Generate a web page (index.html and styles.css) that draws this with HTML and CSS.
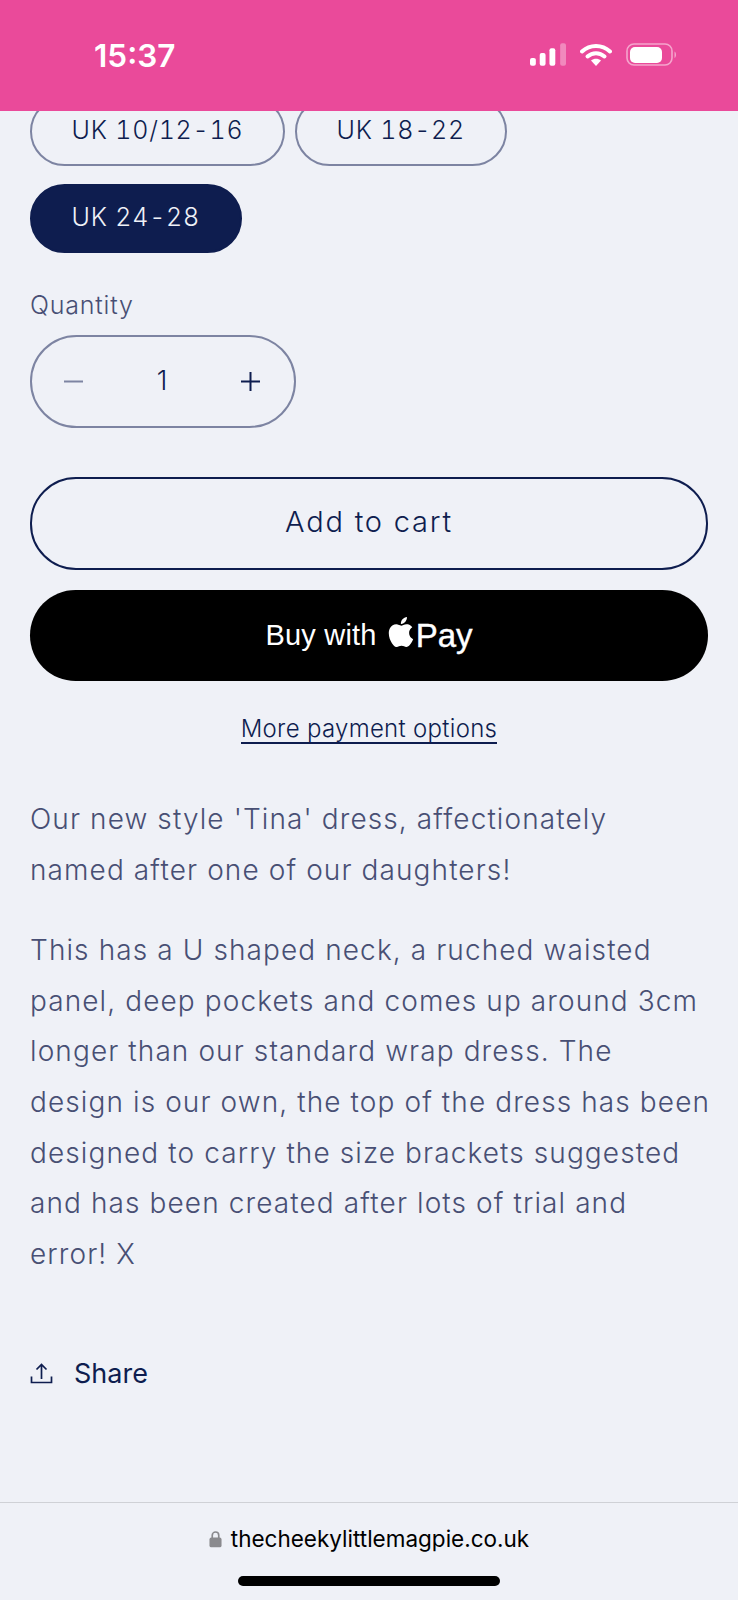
FILE: index.html
```html
<!DOCTYPE html>
<html lang="en">
<head>
    <meta charset="UTF-8">
    <meta name="viewport" content="width=device-width, initial-scale=1.0">
    <title>Tina dress</title>
    <link rel="stylesheet" href="styles.css">
</head>
<body>
    <div class="page">
        <header class="status">
            <span class="time">15:37</span>
            <div class="status-icons">
                <svg class="signal" width="36" height="24" viewBox="0 0 37 24">
                    <rect x="0" y="15" width="6" height="8" rx="2" fill="#fff"/>
                    <rect x="10" y="10" width="6" height="13" rx="2" fill="#fff"/>
                    <rect x="20" y="5" width="6" height="18" rx="2" fill="#fff"/>
                    <rect x="31" y="0" width="6" height="23" rx="2" fill="#fff" opacity="0.35"/>
                </svg>
                <svg class="wifi" width="32" height="23" viewBox="0 0 32 23">
                    <path d="M2 8.5C10 1 22 1 30 8.5" fill="none" stroke="#fff" stroke-width="4" stroke-linecap="round"/>
                    <path d="M7.5 13.5C12.5 9 19.500 9 24.500 13.500" fill="none" stroke="#fff" stroke-width="4" stroke-linecap="round"/>
                    <path d="M11 17.500C14 15 18 15 21 17.500L16 23Z" fill="#fff"/>
                </svg>
                <svg class="battery" width="52" height="24" viewBox="0 0 52 24">
                    <rect x="1" y="1" width="45" height="21" rx="7" fill="none" stroke="#fff" stroke-width="1.6" opacity="0.5"/>
                    <rect x="4" y="4" width="32" height="16" rx="5" fill="#fff"/>
                    <path d="M48.500 8.500C50.500 9.500 50.500 14 48.500 15Z" fill="#fff" opacity="0.5"/>
                </svg>
            </div>
        </header>

        <main class="product">
            <div class="sizes">
                <span class="size">UK 10/12-16</span>
                <span class="size">UK 18-22</span>
                <span class="size active">UK 24-28</span>
            </div>

            <div class="qty-label">Quantity</div>
            <div class="qty">
                <svg width="19" height="19" viewBox="0 0 19 19" stroke="#7d84a2" stroke-width="2"><path d="M0 9.500h19"/></svg>
                <span class="qty-num">1</span>
                <svg width="19" height="19" viewBox="0 0 19 19" stroke="#0e1d4f" stroke-width="2"><path d="M0 9.500h19M9.500 0v19"/></svg>
            </div>

            <button class="btn-cart">Add to cart</button>
            <button class="btn-pay">
                <span class="buy-word">Buy with</span>
                <svg class="apple" width="26" height="30" viewBox="3.6 2 16.8 20">
                    <path fill="#fff" d="M18.71 19.5c-.83 1.24-1.71 2.45-3.05 2.47-1.34.03-1.77-.79-3.29-.79-1.53 0-2 .77-3.27.82-1.31.05-2.3-1.32-3.14-2.53C4.25 17 2.94 12.45 4.7 9.39c.87-1.52 2.43-2.48 4.12-2.51 1.28-.02 2.5.87 3.29.87.78 0 2.26-1.07 3.81-.91.65.03 2.47.26 3.64 1.98-.09.06-2.17 1.28-2.15 3.81.03 3.02 2.65 4.03 2.68 4.04-.03.07-.42 1.44-1.38 2.83M13 3.5c.73-.83 1.94-1.46 2.94-1.5.13 1.17-.34 2.35-1.04 3.19-.69.85-1.83 1.51-2.95 1.42-.15-1.15.41-2.35 1.05-3.11z"/>
                </svg>
                <span class="pay-word">Pay</span>
            </button>
            <div class="more-wrap"><a class="more" href="#">More payment options</a></div>

            <div class="desc">
                <p>Our new style 'Tina' dress, affectionately<br>named after one of our daughters!</p>
                <p>This has a U shaped neck, a ruched waisted<br>panel, deep pockets and comes up around 3cm<br>longer than our standard wrap dress. The<br>design is our own, the top of the dress has been<br>designed to carry the size brackets suggested<br>and has been created after lots of trial and<br>error! X</p>
            </div>

            <div class="share">
                <svg width="23" height="21" viewBox="0 0 23 21" fill="none" stroke="#0e1d4f" stroke-width="1.700">
                    <path d="M1.500 13.500v6h20v-6"/>
                    <path d="M11.500 16V1.500M6.500 6.500l5-5 5 5"/>
                </svg>
                <span>Share</span>
            </div>
        </main>

        <footer class="urlbar">
            <div class="url">
                <svg width="13" height="18" viewBox="0 0 14 18">
                    <path d="M3.500 8V5a3.500 3.500 0 0 1 7 0v3" fill="none" stroke="#8a8a8e" stroke-width="1.800"/>
                    <rect x="0.500" y="7.500" width="13" height="10.500" rx="2" fill="#8a8a8e"/>
                </svg>
                <span>thecheekylittlemagpie.co.uk</span>
            </div>
            <div class="home-bar"></div>
        </footer>
    </div>
</body>
</html>
```

FILE: styles.css
```css
* {
    box-sizing: border-box;
}
body {
    margin: 0;
    background: #eff1f7;
    font-family: "Inter", "Liberation Sans", sans-serif;
    font-weight: 350;
    color: #0e1d4f;
}
.page {
    width: 738px;
    height: 1600px;
    display: flex;
    flex-direction: column;
    overflow: hidden;
}

/* status bar */
.status {
    height: 111px;
    flex: none;
    background: #ea4a9a;
    display: flex;
    justify-content: space-between;
    padding: 43px 60px 0 94px;
    position: relative;
    z-index: 1;
}
.time {
    font-family: "Inter", sans-serif;
    font-weight: 600;
    font-size: 31.500px;
    line-height: 26px;
    color: #fff;
}
.status-icons {
    display: flex;
    gap: 14px;
    height: 24px;
    align-items: flex-start;
}

/* product */
.product {
    flex: 1;
    padding: 0 30px;
}
.sizes {
    display: flex;
    flex-wrap: wrap;
    gap: 18.500px 10px;
    margin-top: -14.500px;
}
.size {
    height: 69px;
    padding: 0 39.500px 3px;
    display: flex;
    align-items: center;
    border: 2px solid #7d84a2;
    border-radius: 35px;
    font-size: 25px;
    font-variant-numeric: tabular-nums;
    letter-spacing: 0.800px;
}
.size.active {
    background: #0e1d4f;
    border-color: #0e1d4f;
    color: #eff1f7;
}
.qty-label {
    margin-top: 37px;
    font-size: 25px;
    line-height: 30px;
    letter-spacing: 0.800px;
    color: #484f74;
}
.qty {
    width: 266px;
    height: 93px;
    margin-top: 15px;
    border: 2px solid #7d84a2;
    border-radius: 47px;
    display: flex;
    align-items: center;
    justify-content: space-between;
    padding: 0 34px 0 32px;
}
.qty-num {
    font-size: 27px;
    padding-bottom: 2px;
}
.btn-cart,
.btn-pay {
    display: flex;
    align-items: center;
    justify-content: center;
    width: 678px;
    height: 91px;
    border-radius: 46px;
}
.btn-cart {
    margin-top: 49px;
    height: 93px;
    padding-bottom: 5px;
    background: none;
    border: 2px solid #0e1d4f;
    color: #0e1d4f;
    font-family: inherit;
    font-weight: 350;
    font-size: 29px;
    letter-spacing: 1.800px;
}
.btn-pay {
    margin-top: 20px;
    background: #000;
    border: none;
    color: #fff;
    font-family: "Liberation Sans", sans-serif;
    font-size: 29px;
}
.buy-word {
    letter-spacing: 0.200px;
}
.apple {
    margin: -7px 2px 0 11px;
}
.pay-word {
    font-size: 33px;
    -webkit-text-stroke: 0.400px #fff;
}
.more-wrap {
    margin-top: 34px;
    text-align: center;
}
.more {
    font-size: 24px;
    line-height: 27px;
    letter-spacing: 0.300px;
    color: #0e1d4f;
    text-decoration: none;
    border-bottom: 2px solid #0e1d4f;
    display: inline-block;
}
.desc {
    margin-top: 50px;
    color: #484f74;
    font-size: 28px;
    line-height: 50.600px;
    letter-spacing: 1.100px;
    white-space: nowrap;
}
.desc p {
    margin: 0 0 30px;
}
.share {
    margin-top: 78px;
    display: flex;
    align-items: center;
    gap: 21px;
    font-family: "Inter", sans-serif;
    font-weight: 400;
    font-size: 27px;
}

/* url bar */
.urlbar {
    height: 98px;
    flex: none;
    border-top: 1px solid #cfd1d6;
    display: flex;
    flex-direction: column;
    align-items: center;
    padding-top: 20px;
}
.url {
    display: flex;
    align-items: center;
    gap: 9px;
    font-family: "Inter", sans-serif;
    font-weight: 400;
    font-size: 22.500px;
    line-height: 32px;
    color: #000;
}
.home-bar {
    width: 262px;
    height: 10px;
    margin-top: 21px;
    border-radius: 5px;
    background: #000;
}
```
